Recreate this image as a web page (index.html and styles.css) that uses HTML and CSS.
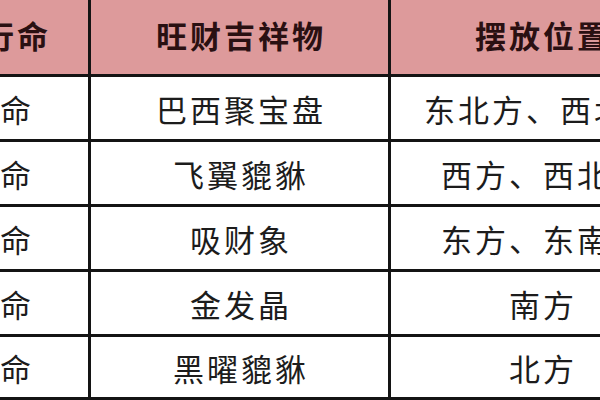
FILE: index.html
```html
<!DOCTYPE html>
<html lang="zh-CN">
<head>
<meta charset="utf-8">
<title>五行旺财吉祥物</title>
<link rel="stylesheet" href="styles.css">
</head>
<body>
<div class="sheet">
  <div class="grid">
    <div class="cell head">五行命</div>
    <div class="cell head">旺财吉祥物</div>
    <div class="cell head">摆放位置</div>

    <div class="cell">金命</div>
    <div class="cell">巴西聚宝盘</div>
    <div class="cell">东北方、西北方</div>

    <div class="cell">金命</div>
    <div class="cell">飞翼貔貅</div>
    <div class="cell">西方、西北方</div>

    <div class="cell">木命</div>
    <div class="cell">吸财象</div>
    <div class="cell">东方、东南方</div>

    <div class="cell">火命</div>
    <div class="cell">金发晶</div>
    <div class="cell">南方</div>

    <div class="cell">水命</div>
    <div class="cell">黑曜貔貅</div>
    <div class="cell">北方</div>
  </div>
</div>
</body>
</html>
```

FILE: styles.css
```css
html, body {
  margin: 0;
  padding: 0;
  background: #ffffff;
}

.sheet {
  width: 600px;
  height: 400px;
  overflow: hidden;
}

.grid {
  display: grid;
  grid-template-columns: 179px 297px 301px;
  grid-template-rows: 74px repeat(4, 62px) 60px;
  gap: 3px;
  background: #141414;
  margin-left: -91px;
  width: 783px;
  padding-bottom: 3px;
  font-family: "Noto Sans CJK SC", "Noto Sans", sans-serif;
}

.cell {
  background: #ffffff;
  color: #1c1c1c;
  font-size: 31px;
  letter-spacing: 3px;
  padding-left: 3px;
  display: flex;
  align-items: center;
  justify-content: center;
  white-space: nowrap;
  overflow: hidden;
}

.head {
  background: #dd9a9b;
  color: #2a1012;
  font-weight: 700;
  padding-bottom: 6px;
}
```
